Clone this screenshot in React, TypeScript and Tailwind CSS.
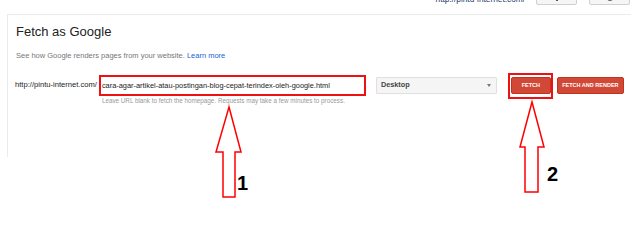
import React from 'react';

const font = "font-['Liberation_Sans',Arial,sans-serif]";

export default function App() {
  return (
    <div className={`relative w-[640px] h-[242px] overflow-hidden bg-white ${font}`}>
      {/* Top bar, mostly scrolled off */}
      <div className="h-[14px] flex justify-end items-start pr-[10px]">
        <span className="-mt-[6px] mr-[11px] text-[8.3px] leading-[10px] text-[#2a3a6a] whitespace-nowrap">
          http://pintu-internet.com/
        </span>
        <div className="-mt-[15px] w-[41px] h-[20px] rounded-[2px] border border-[#d0d0d0] bg-[#f5f5f5] flex items-end justify-center pb-[3px]">
          <div className="w-[2px] h-[2px] bg-[#555]" />
        </div>
        <div className="-mt-[15px] ml-[12px] w-[41px] h-[20px] rounded-[2px] border border-[#d0d0d0] bg-[#f5f5f5] flex items-end justify-center pb-[3px]">
          <div className="w-[6px] h-[3px] rounded-b-full bg-[#666]" />
        </div>
      </div>

      {/* Card */}
      <div className="ml-[7px] mr-[9px] h-[143px] border-t border-l border-[#ebebeb] pl-[8px] pt-[9px]">
        <h1 className="text-[13px] leading-[15px] text-[#222]">Fetch as Google</h1>
        <p className="mt-[12px] text-[7.5px] leading-[10px] text-[#777]">
          See how Google renders pages from your website. <span className="text-[#1a5fd0]">Learn more</span>
        </p>

        <div className="mt-[12px] flex items-start">
          <span className="mt-[7px] -ml-[1px] text-[7.6px] leading-[10px] text-[#222] whitespace-nowrap">
            http://pintu-internet.com/
          </span>
          <div className="ml-[2px] mt-[2px] flex flex-col">
            <div className="w-[267px] h-[21px] border-2 border-[#ee1111] flex items-center pl-[1px]">
              <span className="text-[7.4px] leading-[10px] text-[#222] whitespace-nowrap">
                cara-agar-artikel-atau-postingan-blog-cepat-terindex-oleh-google.html
              </span>
            </div>
            <span className="mt-[1px] ml-[3px] text-[6.3px] leading-[8px] text-[#999] whitespace-nowrap">
              Leave URL blank to fetch the homepage. Requests may take a few minutes to process.
            </span>
          </div>
          <div className="ml-[10px] mt-[4px] w-[121px] h-[17px] border border-[#e0e0e0] bg-[#f5f5f5] rounded-[1px] flex items-center justify-between pl-[4px] pr-[5px]">
            <span className="text-[7.3px] font-bold text-[#444]">Desktop</span>
            <span className="w-0 h-0 border-l-[2.5px] border-r-[2.5px] border-t-[3px] border-l-transparent border-r-transparent border-t-[#777]" />
          </div>
          <div className="ml-[11px] w-[45px] h-[26px] border-2 border-[#ee1111] flex items-start pl-[1px] pt-[2px]">
            <button className="w-[40px] h-[17px] rounded-[2px] bg-[#d14836] border border-[#c1331f] text-white text-[5.5px] font-bold leading-none flex items-center justify-center">
              FETCH
            </button>
          </div>
          <button className="ml-[4px] mt-[4px] w-[67px] h-[17px] rounded-[2px] bg-[#d14836] border border-[#c1331f] text-white text-[5.5px] font-bold leading-none whitespace-nowrap flex items-center justify-center">
            FETCH AND RENDER
          </button>
        </div>
      </div>

      {/* Annotation arrows */}
      <svg className="absolute inset-0 pointer-events-none" width="640" height="242" viewBox="0 0 640 242">
        <polygon points="229,107 241,152 235,152 235,197 223,197 223,152 216,152" fill="white" stroke="#ff0000" strokeWidth="1.5" strokeLinejoin="miter" />
        <polygon points="532,102 544,147 538,147 538,192 525,192 525,147 520,147" fill="white" stroke="#ff0000" strokeWidth="1.5" strokeLinejoin="miter" />
      </svg>
      <span className="absolute left-[237px] top-[173px] text-[20px] leading-[20px] font-bold text-black">1</span>
      <span className="absolute left-[547px] top-[164px] text-[20px] leading-[20px] font-bold text-black">2</span>
    </div>
  );
}
